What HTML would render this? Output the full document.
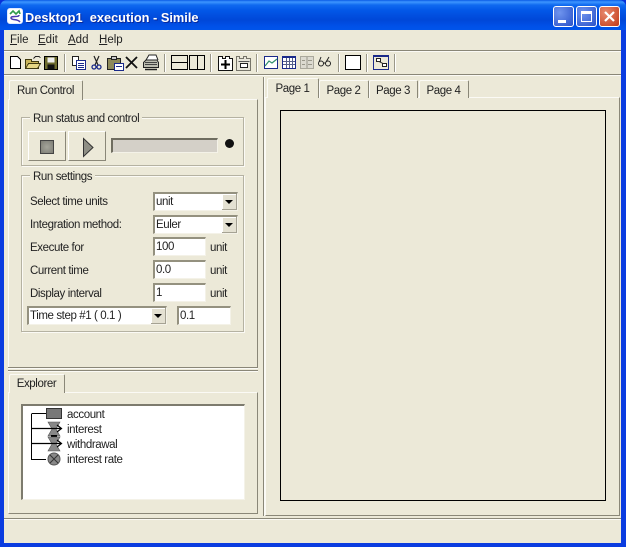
<!DOCTYPE html>
<html><head><meta charset="utf-8">
<style>
html,body{margin:0;padding:0;width:626px;height:547px;overflow:hidden;background:#0831d9}
body{position:relative;font-family:"Liberation Sans",sans-serif;font-size:11.5px;letter-spacing:-.4px;color:#222}
.a{position:absolute}
.t{position:absolute;white-space:nowrap;line-height:14px;color:#222;margin-top:1px}
.m{margin-top:0;font-size:11.5px;letter-spacing:0}
.h{position:absolute;height:1px;background:#8a8778}
.v{position:absolute;width:1px;background:#8a8778}
.w{background:#fbfaf5}
.group{position:absolute;border:1px solid #b5b2a2;box-shadow:1px 1px 0 #fbfaf5,inset 1px 1px 0 #fbfaf5}
.lg{position:absolute;background:#ece9d8;padding:0 3px;line-height:14px;white-space:nowrap;color:#222;margin-top:1px}
.in{position:absolute;background:#fff;border-top:2px solid #94917f;border-left:2px solid #94917f;box-sizing:border-box;line-height:16px;padding-left:1px;white-space:nowrap;color:#222;height:19px;border-bottom:1px solid #f4f2e8;border-right:1px solid #f4f2e8}
.dd{position:absolute;right:0;top:0;width:15px;height:16px;background:#e4e1d2;box-shadow:inset -1px -1px 0 #a5a293,inset 1px 1px 0 #fff}
.dd:after{content:"";position:absolute;left:3px;top:6px;border-left:4px solid transparent;border-right:4px solid transparent;border-top:4px solid #000}
.btn{position:absolute;background:#ece9d8;box-sizing:border-box;border:1px solid;border-color:#fff #8a8778 #8a8778 #fff}
.tab{position:absolute;background:#ece9d8;border-top:1px solid #fbfaf5;border-left:1px solid #fbfaf5;border-right:1px solid #8a8778;border-radius:2px 2px 0 0;box-sizing:border-box;text-align:center;line-height:21px;color:#222;overflow:hidden;padding-right:1px}
.sep{position:absolute;top:54px;width:1px;height:18px;background:#9a9788;box-shadow:1px 0 0 #fff}
u{text-decoration:underline}
svg{position:absolute;overflow:visible}
</style></head><body>

<!-- window -->
<div class="a" style="left:0;top:0;width:626px;height:547px;background:#0a3ce0;border-radius:7px 7px 0 0"></div>
<div class="a" style="left:0;top:0;width:626px;height:30px;border-radius:7px 7px 0 0;background:linear-gradient(180deg,#0a5ce6 0,#3d95ff 2px,#0f6af0 5px,#0358e8 10px,#0047d8 20px,#0050e8 26px,#0055ea 30px)"></div>
<div class="a" style="left:4px;top:30px;width:617px;height:513px;background:#ece9d8"></div>

<!-- title -->
<svg style="left:7px;top:8px" width="16" height="16" viewBox="0 0 16 16">
<rect x=".5" y=".5" width="15" height="15" rx="2.500" fill="#fff" stroke="#dfe9ff"/>
<path d="M3 6 L6 3 L9 6 L12 3 L13 6" fill="none" stroke="#2f9a4a" stroke-width="1.600"/>
<path d="M12 7 C12 10 4 7 4 10 C5 13 10 10 13 14" fill="none" stroke="#4a3ab0" stroke-width="1.500"/>
</svg>
<div class="t" style="left:25px;top:9px;color:#fff;font-weight:bold;font-size:12.8px;letter-spacing:0;line-height:15px;white-space:pre;text-shadow:1px 1px 0 #0a2a9a">Desktop1  execution - Simile</div>

<div class="a" style="left:553px;top:6px;width:21px;height:21px;box-sizing:border-box;border:1px solid #fff;border-radius:3px;background:radial-gradient(circle at 30% 30%,#6f94ee,#2a52c8)"><div class="a" style="left:4px;top:13px;width:8px;height:3px;background:#fff"></div></div>
<div class="a" style="left:576px;top:6px;width:21px;height:21px;box-sizing:border-box;border:1px solid #fff;border-radius:3px;background:radial-gradient(circle at 30% 30%,#6f94ee,#2a52c8)"><div class="a" style="left:4px;top:4px;width:11px;height:11px;box-sizing:border-box;border:1px solid #fff;border-top-width:3px"></div></div>
<div class="a" style="left:599px;top:6px;width:21px;height:21px;box-sizing:border-box;border:1px solid #fff;border-radius:3px;background:radial-gradient(circle at 30% 30%,#e88a70,#c23a18)">
<svg style="left:4px;top:4px" width="11" height="11" viewBox="0 0 11 11"><path d="M1 1 L10 10 M10 1 L1 10" stroke="#fff" stroke-width="2.200"/></svg></div>

<!-- menu -->
<div class="t m" style="left:10px;top:33px"><u>F</u>ile</div>
<div class="t m" style="left:38px;top:33px"><u>E</u>dit</div>
<div class="t m" style="left:68px;top:33px"><u>A</u>dd</div>
<div class="t m" style="left:99px;top:33px"><u>H</u>elp</div>
<div class="h" style="left:4px;top:50px;width:617px;background:#8a8778"></div>
<div class="h w" style="left:4px;top:51px;width:617px"></div>

<!-- toolbar -->
<svg style="left:0;top:50px" width="626" height="26" viewBox="0 0 626 26" fill="none" stroke="#000" stroke-width="1" shape-rendering="crispEdges">
<!-- new -->
<path d="M10.500 6.500H17.500L20.500 9.500V18.500H10.500Z" fill="#fff"/>
<!-- open -->
<path d="M25.500 18.500V9.500H31.500V11.500H38.500V18.500Z" fill="#c9b458" stroke="#3f3a10"/>
<path d="M25.500 18.500L28.500 13.500H40.500L37.500 18.500Z" fill="#e6d785" stroke="#3f3a10"/>
<path d="M33.500 8.500C35 6 38 5.500 40.500 7.500" stroke="#222"/>
<!-- save -->
<rect x="44.500" y="6.500" width="13" height="13" fill="#6e6c2e"/>
<rect x="47.500" y="7.500" width="7" height="5" fill="#eee" stroke="none"/>
<rect x="47.500" y="14.500" width="7" height="5" fill="#111" stroke="none"/>
<!-- copy -->
<path d="M72.500 6.500H78.500V15.500H72.500Z" fill="#fff" stroke="#222"/>
<path d="M76.500 10.500H85.500V19.500H76.500Z" fill="#fff" stroke="#1a2a8a"/>
<path d="M78 13.500H84M78 15.500H84M78 17.500H84" stroke="#1a2a8a"/>
<!-- cut -->
<g shape-rendering="auto"><path d="M94 6L98 15M99 6L95 15" stroke="#222" stroke-width="1.200"/>
<circle cx="94" cy="17" r="2" stroke="#1a2a8a" stroke-width="1.300"/><circle cx="99" cy="17" r="2" stroke="#1a2a8a" stroke-width="1.300"/></g>
<!-- paste -->
<rect x="107.500" y="8.500" width="13" height="11" fill="#8d8a5a" stroke="#222"/>
<rect x="111.500" y="6.500" width="5" height="3" fill="#ccc" stroke="#222"/>
<rect x="114.500" y="13.500" width="9" height="7" fill="#fff" stroke="#1a2a8a"/>
<path d="M116 16.500H122" stroke="#1a2a8a"/>
<!-- delete -->
<g shape-rendering="auto"><path d="M126 7L137 18M137 7L126 18" stroke="#111" stroke-width="1.800"/></g>
<!-- print -->
<g shape-rendering="auto">
<path d="M146 10L149 5H156L158 10" fill="#fff" stroke="#222"/>
<path d="M143.500 12.500L146 10H157L158.500 12.500V17.500H143.500Z" fill="#bdbdb0" stroke="#222"/>
<path d="M145 19.500H157" stroke="#222" stroke-width="1.500"/><path d="M145 12.500H157M145 14.500H157" stroke="#444"/></g>
<!-- layouts -->
<rect x="171.500" y="5.500" width="16" height="14" fill="#ece9d8"/><path d="M171.500 12.500H187.500"/>
<rect x="189.500" y="5.500" width="15" height="14" fill="#ece9d8"/><path d="M197.500 5.500V19.500"/>
<!-- add model -->
<path d="M218.500 8.500V6.500H222.500V8.500H225.500V6.500H229.500V8.500H232.500V20.500H218.500Z" fill="#fff" stroke="#111"/>
<path d="M225.500 10V19M221 14.500H230" stroke="#000" stroke-width="2"/>
<path d="M236.500 8.500V6.500H239.500V8.500H243.500V6.500H246.500V8.500H250.500V20.500H236.500Z" fill="#e8e6da" stroke="#77756a"/>
<path d="M240.500 13.500H247.500V17.500H240.500Z" fill="#fff" stroke="#222"/>
<path d="M238.500 11.500H249.500" stroke="#555"/>
<!-- graph -->
<rect x="264.500" y="6.500" width="13" height="12" fill="#fff" stroke="#1a2a8a"/>
<g shape-rendering="auto"><path d="M265 16L269 11L272 13L277 9" stroke="#2f8f6a" stroke-width="1.200"/></g>
<!-- table -->
<rect x="282.500" y="6.500" width="13" height="12" fill="#fff" stroke="#1a2a8a"/>
<rect x="282" y="6" width="14" height="2" fill="#1a2a8a" stroke="none"/>
<path d="M286.500 8V18M289.500 8V18M292.500 8V18M283 11.500H295M283 14.500H295" stroke="#55608a"/>
<!-- disabled -->
<rect x="300.500" y="6.500" width="13" height="12" fill="#dcdad0" stroke="#aaa89c"/>
<path d="M302 10.500H305M308 10.500H312M302 14.500H305M308 14.500H312M307 7V18" stroke="#99978a"/>
<!-- glasses -->
<g shape-rendering="auto"><circle cx="321" cy="13.500" r="2.500" stroke="#222"/><circle cx="328" cy="13.500" r="2.500" stroke="#222"/><path d="M319 12L321 7M326 12L329 7M323.500 13H325.500" stroke="#222"/></g>
<!-- white box -->
<rect x="345.500" y="5.500" width="15" height="14" fill="#fff"/>
<!-- diagram -->
<rect x="373.500" y="5.500" width="15" height="14" fill="#ece9d8" stroke="#1a2a8a"/>
<rect x="373" y="5" width="16" height="2" fill="#1a2a8a" stroke="none"/>
<rect x="376.500" y="8.500" width="4" height="3" fill="#fff" stroke="#222"/>
<rect x="382.500" y="13.500" width="4" height="3" fill="#fff" stroke="#222"/>
<path d="M379 11.500L383 13.500" stroke="#222"/>
</svg>
<div class="sep" style="left:64px"></div>
<div class="sep" style="left:164px"></div>
<div class="sep" style="left:210px"></div>
<div class="sep" style="left:256px"></div>
<div class="sep" style="left:338px"></div>
<div class="sep" style="left:366px"></div>
<div class="sep" style="left:394px"></div>
<div class="h" style="left:4px;top:74px;width:617px"></div>
<div class="h w" style="left:4px;top:75px;width:617px"></div>

<!-- left run control panel -->
<div class="a" style="left:8px;top:99px;width:250px;height:268px;box-sizing:border-box;border-top:1px solid #fbfaf5;border-left:1px solid #fbfaf5;border-right:1px solid #8a8778"></div>
<div class="tab" style="left:9px;top:80px;width:74px;height:20px">Run Control</div>
<div class="h" style="left:8px;top:367px;width:250px"></div>
<div class="h w" style="left:8px;top:368px;width:250px"></div>
<div class="h" style="left:8px;top:370px;width:250px"></div>
<div class="h w" style="left:8px;top:371px;width:250px"></div>

<!-- group 1 -->
<div class="group" style="left:21px;top:117px;width:221px;height:47px"></div>
<div class="lg" style="left:30px;top:111px">Run status and control</div>
<div class="btn" style="left:28px;top:131px;width:38px;height:30px"></div>
<div class="a" style="left:40px;top:140px;width:14px;height:14px;background:radial-gradient(circle,#a5a59b,#7d7d75);border:1px solid #444;box-sizing:border-box"></div>
<div class="btn" style="left:68px;top:131px;width:38px;height:30px"></div>
<svg style="left:82px;top:138px" width="12" height="19" viewBox="0 0 12 19"><path d="M1.500 0.500L11 9.500L1.500 18.500Z" fill="#8f8f85" stroke="#333"/></svg>
<div class="a" style="left:111px;top:138px;width:107px;height:15px;background:#d4d0c8;box-sizing:border-box;border-top:2px solid #6f6d60;border-left:2px solid #6f6d60;border-bottom:1px solid #f4f2e8;border-right:1px solid #f4f2e8"></div>
<div class="a" style="left:225px;top:139px;width:9px;height:9px;border-radius:50%;background:#111"></div>

<!-- group 2 -->
<div class="group" style="left:21px;top:175px;width:221px;height:155px"></div>
<div class="lg" style="left:30px;top:169px">Run settings</div>
<div class="t" style="left:30px;top:194px">Select time units</div>
<div class="in" style="left:153px;top:192px;width:85px;">unit<div class="dd"></div></div>
<div class="t" style="left:30px;top:217px">Integration method:</div>
<div class="in" style="left:153px;top:215px;width:85px;">Euler<div class="dd"></div></div>
<div class="t" style="left:30px;top:240px">Execute for</div>
<div class="in" style="left:153px;top:237px;width:53px;">100</div>
<div class="t" style="left:210px;top:240px">unit</div>
<div class="t" style="left:30px;top:263px">Current time</div>
<div class="in" style="left:153px;top:260px;width:53px;">0.0</div>
<div class="t" style="left:210px;top:263px">unit</div>
<div class="t" style="left:30px;top:286px">Display interval</div>
<div class="in" style="left:153px;top:283px;width:53px;">1</div>
<div class="t" style="left:210px;top:286px">unit</div>
<div class="in" style="left:27px;top:306px;width:140px;">Time step #1 ( 0.1 )<div class="dd"></div></div>
<div class="in" style="left:177px;top:306px;width:54px;">0.1</div>

<!-- explorer -->
<div class="a" style="left:8px;top:392px;width:250px;height:122px;box-sizing:border-box;border-top:1px solid #fbfaf5;border-left:1px solid #fbfaf5;border-right:1px solid #8a8778;border-bottom:1px solid #8a8778"></div>
<div class="tab" style="left:9px;top:374px;width:56px;height:19px;line-height:19px">Explorer</div>
<div class="a" style="left:21px;top:404px;width:224px;height:96px;background:#fff;box-sizing:border-box;border-top:2px solid #7d7b6e;border-left:2px solid #7d7b6e;border-bottom:1px solid #f4f2e8;border-right:1px solid #f4f2e8"></div>
<svg style="left:0;top:0" width="260" height="480" viewBox="0 0 260 480" fill="none">
<path d="M31.500 414V459.500H46M31.500 413.500H46" stroke="#000" stroke-width="1"/>
<rect x="46.500" y="408.500" width="15" height="10" fill="#777" stroke="#333"/>
<path d="M48 422H60L56 429L60 436H48L52 429Z" fill="#888" stroke="#555" stroke-width=".6"/>
<rect x="51" y="435" width="6" height="2" fill="#000"/>
<path d="M48 437H60L56 444L60 451H48L52 444Z" fill="#888" stroke="#555" stroke-width=".6"/>
<path d="M31 428.500H61M31 443.500H61M57 425L61.500 428.500L57 432M57 440L61.500 443.500L57 447" stroke="#000" stroke-width="1.200"/>
<circle cx="54" cy="459" r="6" fill="#888" stroke="#555"/>
<path d="M50 455L58 463M58 455L50 463" stroke="#333"/>
</svg>
<div class="t" style="left:67px;top:407px">account</div>
<div class="t" style="left:67px;top:422px">interest</div>
<div class="t" style="left:67px;top:437px">withdrawal</div>
<div class="t" style="left:67px;top:452px">interest rate</div>

<!-- right -->
<div class="v" style="left:263px;top:77px;height:439px"></div>
<div class="v w" style="left:264px;top:77px;height:439px"></div>
<div class="a" style="left:265px;top:97px;width:355px;height:419px;box-sizing:border-box;border-top:1px solid #fbfaf5;border-left:1px solid #fbfaf5;border-right:1px solid #8a8778;border-bottom:1px solid #8a8778"></div>
<div class="tab" style="left:319px;top:80px;width:50px;height:18px">Page 2</div>
<div class="tab" style="left:369px;top:80px;width:49px;height:18px">Page 3</div>
<div class="tab" style="left:419px;top:80px;width:50px;height:18px">Page 4</div>
<div class="tab" style="left:267px;top:78px;width:52px;height:20px">Page 1</div>
<div class="a" style="left:280px;top:110px;width:326px;height:391px;box-sizing:border-box;border:1px solid #000"></div>

<!-- status -->
<div class="h" style="left:4px;top:518px;width:617px"></div>
<div class="h w" style="left:4px;top:519px;width:617px"></div>
</body></html>
